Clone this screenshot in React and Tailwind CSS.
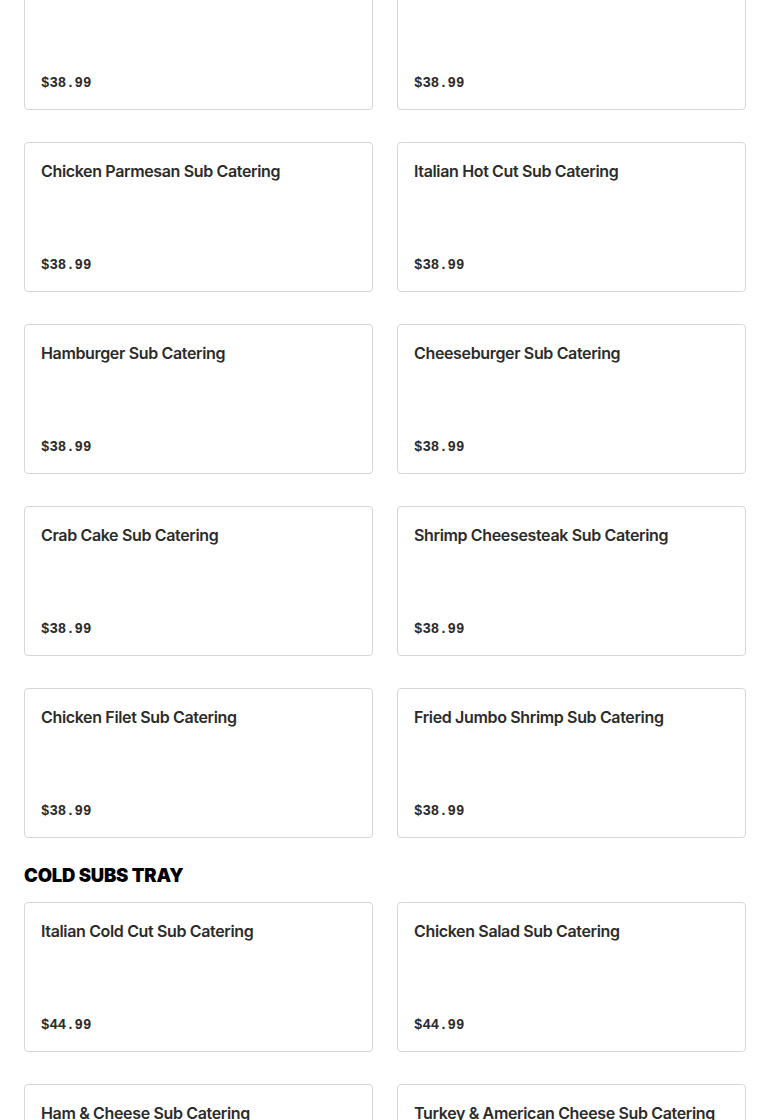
const hotSubs = [
  { name: "", price: "$38.99" },
  { name: "", price: "$38.99" },
  { name: "Chicken Parmesan Sub Catering", price: "$38.99" },
  { name: "Italian Hot Cut Sub Catering", price: "$38.99" },
  { name: "Hamburger Sub Catering", price: "$38.99" },
  { name: "Cheeseburger Sub Catering", price: "$38.99" },
  { name: "Crab Cake Sub Catering", price: "$38.99" },
  { name: "Shrimp Cheesesteak Sub Catering", price: "$38.99" },
  { name: "Chicken Filet Sub Catering", price: "$38.99" },
  { name: "Fried Jumbo Shrimp Sub Catering", price: "$38.99" },
];

const coldSubs = [
  { name: "Italian Cold Cut Sub Catering", price: "$44.99" },
  { name: "Chicken Salad Sub Catering", price: "$44.99" },
  { name: "Ham & Cheese Sub Catering", price: "$44.99" },
  { name: "Turkey & American Cheese Sub Catering", price: "$44.99" },
];

function ItemCard({ item }) {
  return (
    <div className="h-[150px] flex flex-col justify-between px-4 pt-4 pb-[14px] bg-white border border-[#d6d6d6] rounded-[4px]">
      <h3 className="text-[16px] leading-6 font-semibold text-[#2b2b2b] tracking-[-0.35px]">{item.name}</h3>
      <span className="font-['Liberation_Mono',monospace] font-bold text-[14px] leading-6 text-[#2b2b2b]">{item.price}</span>
    </div>
  );
}

export default function App() {
  return (
    <div className="min-h-screen bg-white font-['Inter',sans-serif] px-6 overflow-hidden">
      <div className="mt-[-40px]">
        {/* hot subs (continued) */}
        <div className="grid grid-cols-2 gap-x-6 gap-y-8">
          {hotSubs.map((item, i) => (
            <ItemCard key={i} item={item} />
          ))}
        </div>

        <h2 className="mt-[23px] mb-[13px] text-[18.5px] leading-7 font-black uppercase text-black tracking-[-0.2px]">
          Cold Subs Tray
        </h2>

        <div className="grid grid-cols-2 gap-x-6 gap-y-8 pb-10">
          {coldSubs.map((item, i) => (
            <ItemCard key={i} item={item} />
          ))}
        </div>
      </div>
    </div>
  );
}
